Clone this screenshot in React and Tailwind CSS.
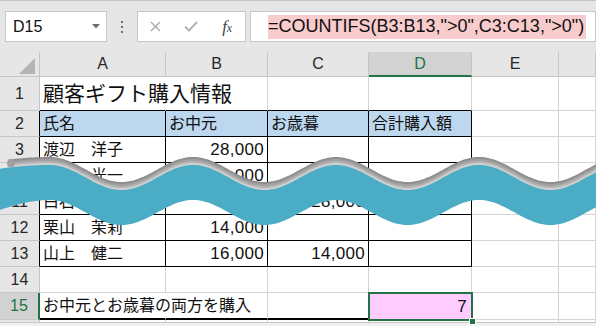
import React from 'react';

const COLS = ['w-[126px]', 'w-[102px]', 'w-[101px]', 'w-[103px]', 'w-[87px]', 'flex-1'];
const GR = 'border-r-[#d4d4d4]';
const GB = 'border-b-[#d4d4d4]';
const BR = 'border-r-black';
const BB = 'border-b-black';

function RowHead({ n, black, sel }) {
  const base = 'w-[40px] shrink-0 h-full flex items-center justify-center border-b border-b-[#c6c6c6] text-[16px]';
  if (sel) {
    return <div className={`${base} bg-[#d2d2d2] text-[#217346] border-r-2 border-r-[#217346]`}>{n}</div>;
  }
  return (
    <div className={`${base} bg-[#e6e6e6] text-[#262626] border-r ${black ? 'border-r-black' : 'border-r-[#c6c6c6]'}`}>{n}</div>
  );
}

function Cell({ i, rc = GR, bc = GB, bw = 'border-b', cls = '', right, children }) {
  return (
    <div
      className={`${COLS[i]} shrink-0 h-full border-r ${bw} ${rc} ${bc} flex items-center whitespace-nowrap ${right ? 'justify-end pr-[3px]' : 'pl-[3px]'} ${cls}`}
    >
      {children}
    </div>
  );
}

function Num({ children }) {
  return <span className="text-[17px] tracking-[0.3px]">{children}</span>;
}

function DataRow({ n, a, b, c }) {
  return (
    <div className="flex h-[26px]">
      <RowHead n={n} black />
      <Cell i={0} rc={BR} bc={BB}>{a}</Cell>
      <Cell i={1} rc={BR} bc={BB} right>{b && <Num>{b}</Num>}</Cell>
      <Cell i={2} rc={BR} bc={BB} right>{c && <Num>{c}</Num>}</Cell>
      <Cell i={3} rc={BR} bc={BB} />
      <Cell i={4} />
      <Cell i={5} />
    </div>
  );
}

function Wave() {
  const P = 143;
  const X0 = 50;
  const gTop = (x) => (x < X0 ? -Math.cos((2 * Math.PI * (x - X0)) / 400) : -Math.cos((2 * Math.PI * (x - X0)) / P));
  const gBot = (x) => (x < X0 ? -Math.cos((2 * Math.PI * (x - X0)) / 230) : -Math.cos((2 * Math.PI * (x - X0)) / P));
  const top = (x) => 177.5 + 12.5 * gTop(x);
  const bot = (x) => 212.5 + 12.5 * gBot(x);
  const band = (t, b, x0, x1) => {
    let d = '';
    for (let x = x0; x <= x1; x += 2) d += (x === x0 ? 'M' : 'L') + x + ' ' + t(x).toFixed(1) + ' ';
    for (let x = x1; x >= x0; x -= 2) d += 'L' + x + ' ' + b(x).toFixed(1) + ' ';
    return d + 'Z';
  };
  const layers = [
    [8, '#8e8e8e'],
    [6, '#a0a0a0'],
    [4, '#b4b4b4'],
    [2, '#d0d0d0'],
  ];
  return (
    <svg className="absolute left-0 top-0 pointer-events-none z-20" width="596" height="326">
      {layers.map(([k, c]) => (
        <path key={k} d={band((x) => top(x) - k, (x) => top(x) + 1, 8, 600)} fill={c} />
      ))}
      <circle cx="11" cy={top(11) - 4} r="4" fill="#a0a0a0" />
      <path d={band(top, bot, -2, 600)} fill="#4bacc6" />
    </svg>
  );
}

export default function App() {
  return (
    <div className="w-[596px] h-[326px] overflow-hidden relative bg-white font-['Liberation_Sans','Noto_Sans_CJK_JP',sans-serif] text-[#111]">
      {/* toolbar */}
      <div className="h-[52px] bg-[#e6e6e6] border-t border-[#c6c6c6] flex items-start pt-[10px]">
        <div className="ml-[5px] w-[102px] h-[31px] bg-white border border-[#c6c6c6] flex items-center justify-between pl-[7px] pr-[6px]">
          <span className="text-[16px] text-[#111]">D15</span>
          <svg width="8" height="5" viewBox="0 0 8 5">
            <polygon points="0,0 8,0 4,4.5" fill="#6f6f6f" />
          </svg>
        </div>
        <div className="ml-[14px] w-[2px] h-[31px] flex flex-col items-center justify-center gap-[3px]">
          <div className="w-[2px] h-[2px] bg-[#6f6f6f]" />
          <div className="w-[2px] h-[2px] bg-[#6f6f6f]" />
          <div className="w-[2px] h-[2px] bg-[#6f6f6f]" />
        </div>
        <div className="ml-[14px] w-[109px] h-[31px] bg-white border border-[#c6c6c6] grid grid-cols-3 items-center">
          <div className="flex justify-center">
            <svg width="11" height="11" viewBox="0 0 11 11">
              <path d="M1 1 L10 10 M10 1 L1 10" stroke="#a6a6a6" strokeWidth="1.3" />
            </svg>
          </div>
          <div className="flex justify-center">
            <svg width="14" height="11" viewBox="0 0 14 11">
              <path d="M1 5.5 L5 9.5 L13 1" stroke="#b3b3b3" strokeWidth="2" fill="none" />
            </svg>
          </div>
          <div className="flex justify-center">
            <span className="font-['Liberation_Serif',serif] italic text-[17px] text-[#444] leading-none">
              f<span className="text-[12px]">x</span>
            </span>
          </div>
        </div>
        <div className="ml-[4px] flex-1 h-[31px] bg-white border border-[#c6c6c6] flex items-center pl-[17px]">
          <span className="bg-[#f8cbcc] h-[24px] flex items-center pr-[2px] text-[18px] text-[#111] whitespace-nowrap">
            =COUNTIFS(B3:B13,"&gt;0",C3:C13,"&gt;0")
          </span>
        </div>
      </div>

      {/* column headers */}
      <div className="flex h-[25px]">
        <div className="w-[40px] shrink-0 h-full bg-[#e6e6e6] border-r border-b border-[#c6c6c6] relative">
          <svg className="absolute left-0 top-0" width="40" height="25">
            <polygon points="35,6 35,22 19,22" fill="#b4b4b4" />
          </svg>
        </div>
        {['A', 'B', 'C', 'D', 'E', ''].map((l, i) => (
          <div
            key={i}
            className={`${COLS[i]} shrink-0 h-full flex items-center justify-center text-[16px] border-r border-r-[#c6c6c6] ${
              l === 'D'
                ? 'bg-[#d2d2d2] text-[#217346] border-b-2 border-b-[#217346]'
                : 'bg-[#e6e6e6] text-[#262626] border-b border-b-[#c6c6c6]'
            }`}
          >
            {l}
          </div>
        ))}
      </div>

      {/* row 1 */}
      <div className="flex h-[34px]">
        <RowHead n="1" />
        <Cell i={0} rc="border-r-white" bc={BB}>
          <span className="text-[21px]">顧客ギフト購入情報</span>
        </Cell>
        <Cell i={1} bc={BB} />
        <Cell i={2} bc={BB} />
        <Cell i={3} bc={BB} />
        <Cell i={4} />
        <Cell i={5} />
      </div>

      {/* row 2 */}
      <div className="flex h-[26px] text-[16px]">
        <RowHead n="2" black />
        <Cell i={0} rc={BR} bc={BB} cls="bg-[#bdd7ee]">氏名</Cell>
        <Cell i={1} rc={BR} bc={BB} cls="bg-[#bdd7ee]">お中元</Cell>
        <Cell i={2} rc={BR} bc={BB} cls="bg-[#bdd7ee]">お歳暮</Cell>
        <Cell i={3} rc={BR} bc={BB} cls="bg-[#bdd7ee]">合計購入額</Cell>
        <Cell i={4} />
        <Cell i={5} />
      </div>

      <div className="text-[16px]">
        <DataRow n="3" a="渡辺　洋子" b="28,000" />
        <DataRow n="4" a="北村　光一" b="23,000" />
        <DataRow n="11" a="白石　直樹" c="28,000" />
        <DataRow n="12" a="栗山　茉莉" b="14,000" />
        <DataRow n="13" a="山上　健二" b="16,000" c="14,000" />
      </div>

      {/* row 14 */}
      <div className="flex h-[26px]">
        <RowHead n="14" />
        <Cell i={0} />
        <Cell i={1} />
        <Cell i={2} />
        <Cell i={3} />
        <Cell i={4} />
        <Cell i={5} />
      </div>

      {/* row 15 */}
      <div className="flex h-[27px] text-[16px]">
        <RowHead n="15" sel />
        <Cell i={0} rc="border-r-white" bc={BB} bw="border-b-2">お中元とお歳暮の両方を購入</Cell>
        <Cell i={1} bc={BB} bw="border-b-2" />
        <Cell i={2} bc={BB} bw="border-b-2" />
        <div className={`${COLS[3]} shrink-0 h-full relative bg-[#ffccff] flex items-center justify-end pr-[5px] z-10`}>
          <Num>7</Num>
          <div className="absolute -left-px -top-px -right-px -bottom-px border-2 border-[#217346]" />
          <div className="absolute -right-[4px] -bottom-[5px] w-[7px] h-[7px] bg-[#217346] border border-white" />
        </div>
        <Cell i={4} />
        <Cell i={5} />
      </div>

      {/* row 16 partial */}
      <div className="flex h-[2px]">
        <div className="w-[40px] shrink-0 h-full bg-[#e6e6e6] border-r border-r-[#c6c6c6]" />
        {[0, 1, 2, 3, 4, 5].map((i) => (
          <div key={i} className={`${COLS[i]} shrink-0 h-full border-r border-r-[#d4d4d4]`} />
        ))}
      </div>
      <div className="h-[10px] bg-[#f0f0f0] border-t border-[#c6c6c6]" />

      <Wave />
    </div>
  );
}
